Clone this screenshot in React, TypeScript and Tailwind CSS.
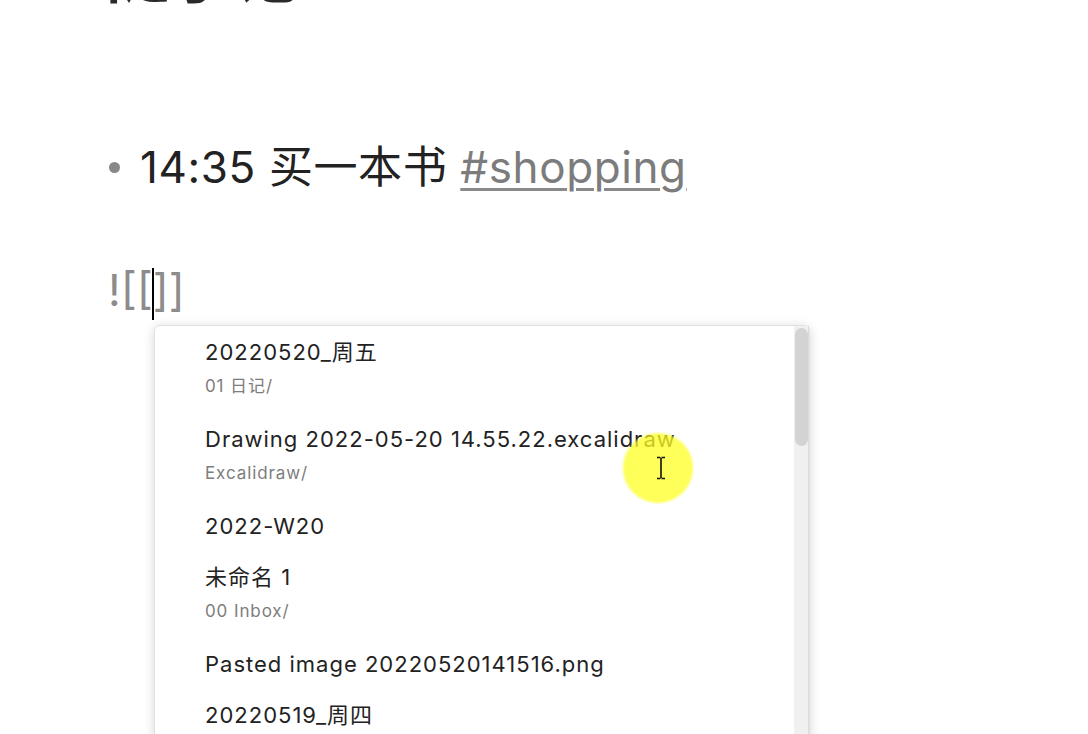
import React from 'react';

type Suggestion = { title: string; path?: string };

const suggestions: Suggestion[] = [
  { title: '20220520_周五', path: '01 日记/' },
  { title: 'Drawing 2022-05-20 14.55.22.excalidraw', path: 'Excalidraw/' },
  { title: '2022-W20' },
  { title: '未命名 1', path: '00 Inbox/' },
  { title: 'Pasted image 20220520141516.png' },
  { title: '20220519_周四' },
  { title: '20220518_周三', path: '01 日记/' },
];

const font = { fontFamily: 'Inter, "Noto Sans CJK SC", sans-serif' };

const App: React.FC = () => {
  return (
    <div className="relative h-[734px] w-[1088px] overflow-hidden bg-white text-[#222222]" style={font}>
      {/* page heading, scrolled mostly out of view */}
      <h1 className="ml-[106px] mt-[-58px] text-[64px] font-bold leading-none text-[#2a2a2a]">随手记</h1>

      <div className="ml-[109px] mt-[131px] flex items-center h-[60px]">
        <div className="mr-[20px] h-[11px] w-[11px] shrink-0 rounded-full bg-[#888888]" />
        <span className="text-[44px] leading-[60px] tracking-[0.6px] whitespace-nowrap">
          14:35 买一本书{' '}
          <span className="text-[#7c7c7c] underline decoration-[#8a8a8a] decoration-[3px] underline-offset-[5px]">#shopping</span>
        </span>
      </div>

      <div className="ml-[108px] mt-[63px] h-[60px] text-[44px] leading-[60px] text-[#8c8c8c] whitespace-nowrap">
        ![[
        <span className="relative inline-block h-[52px] w-[2px] mx-[-1px] align-middle bg-black" />
        ]]
      </div>

      {/* link suggestion popup */}
      <div className="ml-[154px] mt-[5px] flex w-[656px] h-[520px] rounded-[6px] border border-[#e2e2e2] bg-white shadow-[0_2px_12px_rgba(0,0,0,0.16)]">
        <ul className="flex-1 pt-[1px]">
          {suggestions.map((s) => (
            <li key={s.title} className="pl-[50px] py-[10px]">
              <div className="text-[22px] leading-[31px] tracking-[1px] text-[#222222] whitespace-nowrap">{s.title}</div>
              {s.path && <div className="text-[17px] leading-[36px] tracking-[0.9px] text-[#7d7d7d]">{s.path}</div>}
            </li>
          ))}
        </ul>
        <div className="w-[15px] bg-[#f0f0f0] border-r border-[#dcdcdc]">
          <div className="mt-[2px] h-[118px] w-[13px] mx-auto rounded-full bg-[#d3d3d3]" />
        </div>
      </div>

      {/* screen-recording cursor highlight */}
      <div className="pointer-events-none absolute left-[623px] top-[433px] h-[70px] w-[70px] rounded-full bg-[#ffff22] opacity-75 blur-[1px]" />
      <svg className="pointer-events-none absolute left-[655px] top-[456px]" width="12" height="24" viewBox="0 0 12 24">
        <path d="M2 1.5h3.5M6.5 1.5H10M6 2v20M2 22.5h3.5M6.5 22.5H10" stroke="#111" strokeWidth="1.6" fill="none" />
      </svg>
    </div>
  );
};

export default App;
